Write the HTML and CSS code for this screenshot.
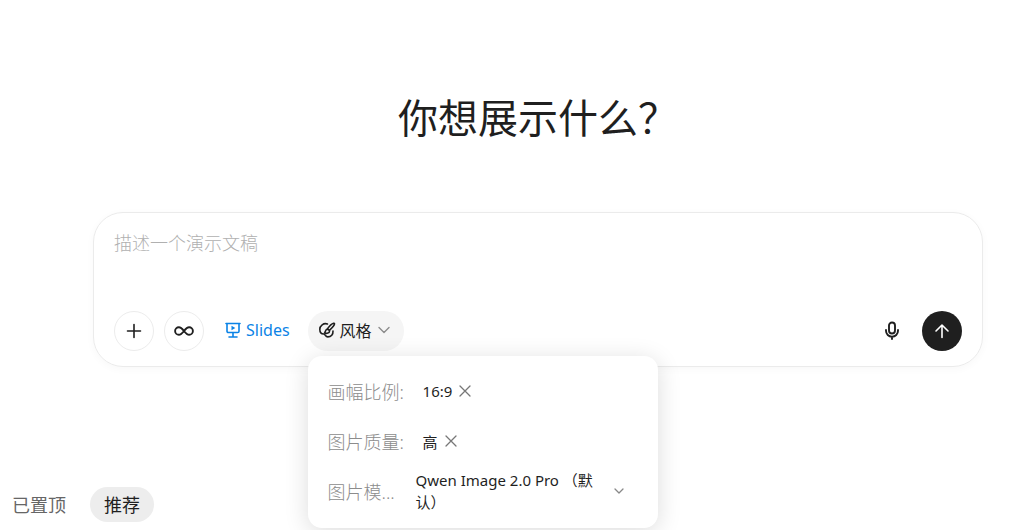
FILE: index.html
```
<!DOCTYPE html>
<html lang="zh-CN">
<head>
    <meta charset="UTF-8">
    <title>Slides</title>
    <link rel="stylesheet" href="styles.css">
</head>
<body>
<div class="page">
    <h1 class="title">你想展示什么？</h1>
    <form class="composer">
        <textarea class="prompt" rows="1" aria-label="描述一个演示文稿" placeholder="描述一个演示文稿"></textarea>
        <div class="toolbar">
            <button type="button" class="round" aria-label="添加">
                <svg width="16" height="16" viewBox="0 0 16 16"><path d="M8 1.500v13M1.500 8h13"/></svg>
            </button>
            <button type="button" class="round" aria-label="无限">
                <svg class="bold" width="20" height="12" viewBox="0 0 20 12"><path d="M10 6C8 3.400 6.600 2.200 4.900 2.200a3.800 3.800 0 0 0 0 7.600C6.600 9.800 8 8.600 10 6s3.400-3.800 5.100-3.800a3.800 3.800 0 0 1 0 7.600C13.400 9.800 12 8.600 10 6z"/></svg>
            </button>
            <button type="button" class="slides">
                <svg width="16" height="16" viewBox="0 0 16 16"><path d="M1 1.500h14M2 1.500v7.700a1.300 1.300 0 0 0 1.300 1.300h9.400A1.300 1.300 0 0 0 14 9.200V1.500M8 10.500V15M4 15h8"/><path class="solid" d="M6.500 3.700v4.600L10.300 6z"/></svg>
                Slides
            </button>
            <div class="style">
                <button type="button" class="style_btn" aria-expanded="true">
                    <svg width="18" height="18" viewBox="0 0 18 18"><path d="M9.500 3C5.500 1.700 1.800 4.600 1.800 8.300c0 3 1.800 4.700 4 4.700 1.600.1 1.500 2.900 4 2.900 3.400 0 5.400-2.300 5.200-5.900"/><path d="M9.300 8C11.200 5.300 13.800 2.600 15.500 2.200c1.600-.2 1 1.600-.2 3.100-1.100 1.400-2.500 2.700-3.900 4"/><path d="M9.200 8.200c1.500 0 2.400.9 2.300 2-.1 1.900-2.600 2.600-5 1.800 1-.9.700-3.700 2.700-3.800z"/></svg>
                    风格
                    <svg class="arrow" width="12" height="8" viewBox="0 0 12 8"><path d="M1 1.500l5 5 5-5"/></svg>
                </button>
                <div class="panel">
                    <div class="row">
                        <span class="label">画幅比例:</span>
                        <span class="tag">16:9</span>
                        <button type="button" class="remove" aria-label="移除 16:9">
                            <svg width="12" height="12" viewBox="0 0 12 12"><path d="M1 1l10 10M11 1L1 11"/></svg>
                        </button>
                    </div>
                    <div class="row">
                        <span class="label">图片质量:</span>
                        <span class="tag">高</span>
                        <button type="button" class="remove" aria-label="移除 高">
                            <svg width="12" height="12" viewBox="0 0 12 12"><path d="M1 1l10 10M11 1L1 11"/></svg>
                        </button>
                    </div>
                    <div class="row">
                        <span class="label">图片模...</span>
                        <button type="button" class="model">
                            <span class="model_name">Qwen Image 2.0 Pro （默认）</span>
                            <svg width="10" height="8" viewBox="0 0 10 8"><path d="M1 2l4 4 4-4"/></svg>
                        </button>
                    </div>
                </div>
            </div>
            <button type="button" class="mic" aria-label="语音输入">
                <svg class="bold" width="16" height="20" viewBox="0 0 16 20"><rect x="5" y="1.500" width="6" height="11" rx="3"/><path d="M2 9v.8a6 6 0 0 0 12 0V9M8 15.800V18"/></svg>
            </button>
            <button type="submit" class="send" aria-label="发送">
                <svg width="16" height="16" viewBox="0 0 16 16"><path d="M8 14.500V2M2 8l6-6 6 6"/></svg>
            </button>
        </div>
    </form>
</div>
<div class="tabs">
    <button type="button" class="tab">已置顶</button>
    <button type="button" class="tab active">推荐</button>
</div>
</body>
</html>
```

FILE: styles.css
```
* {
    box-sizing: border-box;
    margin: 0;
    padding: 0;
}

body {
    min-height: 100vh;
    background: #fff;
    color: #1f1f1f;
    font-family: "Noto Sans", "Noto Sans CJK SC", sans-serif;
    font-size: 16px;
    overflow: hidden;
}

button, textarea {
    border: 0;
    background: none;
    color: inherit;
    font: inherit;
}

button {
    display: flex;
    align-items: center;
    flex: none;
    cursor: pointer;
}

svg {
    flex: none;
    fill: none;
    stroke: currentColor;
    stroke-width: 1.6;
    stroke-linecap: round;
    stroke-linejoin: round;
}

.bold {
    stroke-width: 1.9;
}

.page {
    padding: 88px 36px 0 93px;
}

.title {
    text-align: center;
    font-size: 40px;
    font-weight: normal;
    line-height: 60px;
}

.composer {
    margin-top: 64px;
    padding: 16px 20px 15px;
    border: 1px solid #ebebeb;
    border-radius: 30px;
    box-shadow: 0 2px 8px rgba(0, 0, 0, .03);
}

.prompt {
    display: block;
    width: 100%;
    height: 82px;
    font-size: 18px;
    line-height: 28px;
    resize: none;
    outline: none;
}

.prompt::placeholder {
    color: #b0b0b0;
    font-weight: 300;
}

.toolbar {
    display: flex;
    align-items: center;
    gap: 10px;
}

.round {
    justify-content: center;
    width: 40px;
    height: 40px;
    border: 1px solid #ececec;
    border-radius: 50%;
}

.slides {
    gap: 5px;
    height: 40px;
    padding: 0 8px 2px 11px;
    color: #0b83e6;
}

.solid {
    fill: currentColor;
    stroke: none;
}

.style {
    position: relative;
}

.style_btn {
    gap: 4px;
    height: 40px;
    padding: 0 14px 2px 10px;
    border-radius: 20px;
    background: #f5f5f5;
}

.arrow {
    margin-left: 2px;
    color: #8c8c8c;
    stroke-width: 1.4;
}

.panel {
    position: absolute;
    top: 45px;
    left: 0;
    width: 350px;
    padding: 10px 20px 12px;
    border-radius: 14px;
    background: #fff;
    box-shadow: 0 4px 24px rgba(0, 0, 0, .14);
    font-size: 15px;
}

.row {
    display: flex;
    align-items: center;
    height: 50px;
}

.label {
    flex: none;
    width: 88px;
    color: #8c8c8c;
    font-size: 18px;
    font-weight: 300;
    white-space: nowrap;
}

.tag {
    margin: 0 7px;
}

.remove {
    color: #777;
}

.remove svg, .model svg {
    stroke-width: 1.3;
}

.model {
    flex: 1;
    justify-content: space-between;
    padding-right: 14px;
    text-align: left;
    line-height: 22px;
}

.model_name {
    width: 184px;
}

.model svg {
    color: #888;
}

.mic {
    justify-content: center;
    width: 40px;
    height: 40px;
    margin-left: auto;
}

.send {
    justify-content: center;
    width: 40px;
    height: 40px;
    border-radius: 50%;
    background: #1f1f1f;
    color: #fff;
}

.tabs {
    display: flex;
    gap: 10px;
    margin-top: 120px;
}

.tab {
    height: 35px;
    padding: 0 14px 2px;
    border-radius: 18px;
    color: #666;
    font-size: 18px;
}

.tab:first-child {
    padding-left: 12px;
}

.active {
    background: #ededed;
    color: #1f1f1f;
}
```
